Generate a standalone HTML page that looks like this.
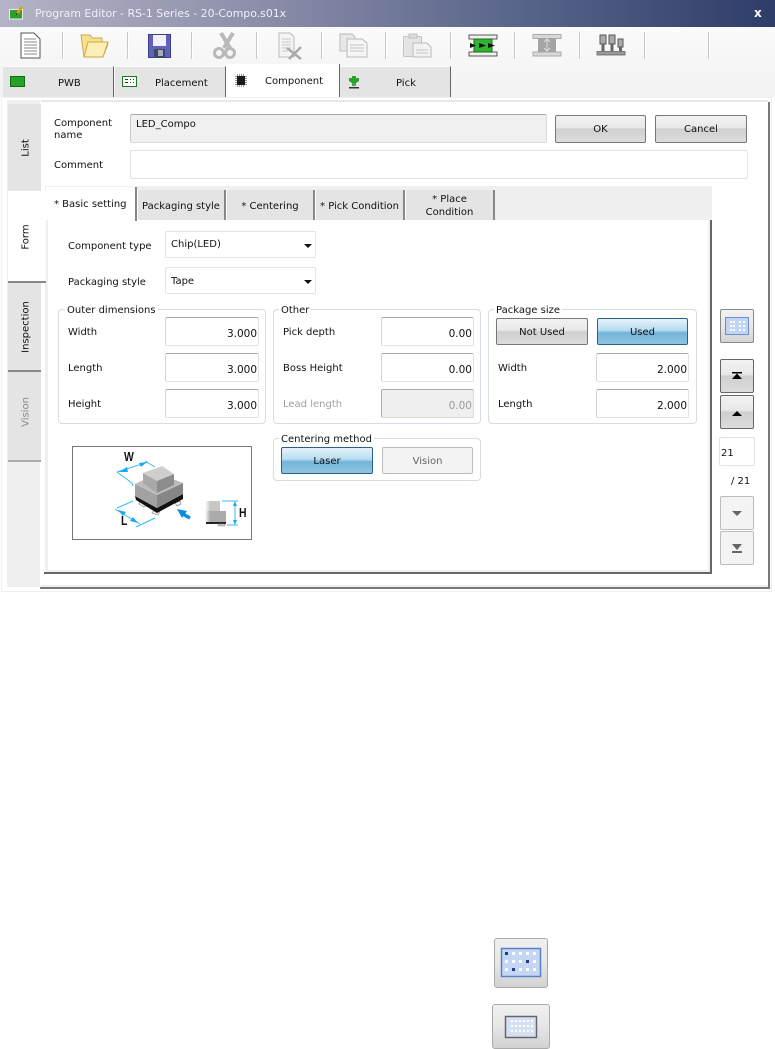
<!DOCTYPE html>
<html><head><meta charset="utf-8"><style>
html,body{margin:0;padding:0;background:#fff;width:775px;height:1049px;overflow:hidden}
body{position:relative;font:10px "DejaVu Sans","Liberation Sans",sans-serif;color:#111}
.a,.t,.i,.b,.g,.v,.sep{position:absolute;box-sizing:border-box}
.t{white-space:nowrap;line-height:14px;margin-top:1px}
.i{background:#fff;border:1px solid #dfe3e8;border-top-color:#a8a8a8;border-left-color:#d4d4d4;border-radius:2px;text-align:right;padding:9px 1px 0 0;line-height:14px;height:29px;width:93px;font-size:10.5px}
.b{text-align:center;border-radius:2px;line-height:28px;height:27px}
.up{background:linear-gradient(#f2f2f2,#e8e8e8 45%,#cfcfcf 50%,#dcdcdc);border:1px solid #777}
.on{background:linear-gradient(#e4f2fa,#b8dcf0 45%,#74b4da 55%,#8ec4e2);border:1px solid #2b5f88}
.off{background:#f3f3f3;border:1px solid #bcbcbc;color:#666}
.g{border:1px solid #d5dce4;border-radius:4px}
.lg{position:absolute;top:-6px;left:6px;background:#fff;padding:0 2px;line-height:13px;white-space:nowrap}
.sep{top:32px;height:27px;background:#c8c8c8;border-right:1px solid #fff;width:2px}
.mt{position:absolute;top:66px;height:31px;background:#e4e4e4;border-right:1px solid #666;border-top:1px solid #fafafa;box-sizing:border-box}
.v{left:8px;width:33px;background:#e4e4e4}
.v span{position:absolute;left:54%;top:50%;transform:translate(-50%,-50%) rotate(-90deg);white-space:nowrap}
.st{position:absolute;top:190px;height:30px;background:#e4e4e4;border-right:2px solid #888;border-left:1px solid #fff;box-sizing:border-box;text-align:center;line-height:13px;display:flex;align-items:center;justify-content:center;padding-top:2px}
.sel{position:absolute;left:165px;width:151px;height:27px;background:#fff;border:1px solid #e0e3e8;border-radius:2px;padding:6px 0 0 5px;line-height:14px;box-sizing:border-box}
.sel:after{content:"";position:absolute;right:3px;top:12px;border:4px solid transparent;border-top:4px solid #111;border-bottom:0}
.nb{position:absolute;left:720px;width:34px;height:34px;box-sizing:border-box;border-radius:2px}
</style></head><body>

<!-- title bar -->
<div class="a" style="left:0;top:0;width:775px;height:27px;background:linear-gradient(90deg,#b4b4c6,#8d8eaa 33%,#5f6a8e 62%,#2e3c69)"></div>
<svg class="a" style="left:9px;top:6px" width="16" height="14"><rect x="0.500" y="3.500" width="13" height="9.500" fill="#2e9e2e" stroke="#eee"/><path d="M8 8 L13 1" stroke="#d9a400" stroke-width="2.500"/><path d="M7.500 9 L8 7" stroke="#222"/></svg>
<div class="t" style="left:35px;top:6px;color:#eef0f6;font-size:10.9px">Program Editor - RS-1 Series - 20-Compo.s01x</div>
<div class="t" style="left:754px;top:5px;color:#fff;font-weight:bold;font-size:12px">x</div>

<!-- toolbar -->
<div class="a" style="left:0;top:27px;width:775px;height:70px;background:linear-gradient(#fafafa,#f2f2f2)"></div>
<div class="sep" style="left:62px"></div><div class="sep" style="left:127px"></div><div class="sep" style="left:191px"></div><div class="sep" style="left:256px"></div><div class="sep" style="left:321px"></div><div class="sep" style="left:385px"></div><div class="sep" style="left:450px"></div><div class="sep" style="left:514px"></div><div class="sep" style="left:579px"></div><div class="sep" style="left:644px"></div><div class="sep" style="left:708px"></div>
<svg class="a" style="left:0;top:27px" width="775" height="38" fill="none">
 <path d="M21 6H34L40 12V31H21Z" fill="#fff" stroke="#555"/><path d="M24 12H36M24 15H37M24 18H37M24 21H37M24 24H37M24 27H37" stroke="#888"/>
 <path d="M84 30L81 8H90L92 11H102V17H108L103 30Z" fill="#fbe08c" stroke="#c9a94a"/><path d="M84 30L88 15H108L103 30Z" fill="#fdeeb6" stroke="#c9a94a"/>
 <rect x="148.500" y="7.500" width="22" height="23" fill="#5f62b8" stroke="#3c3f8e"/><rect x="153" y="8" width="13" height="11" fill="#eef0fa"/><rect x="154" y="22" width="11" height="8" fill="#3a4a60"/><rect x="158" y="23" width="5" height="6" fill="#aab"/>
 <path d="M221 6L230 21M233 6L224 21" stroke="#b9b9b9" stroke-width="4"/><circle cx="219" cy="26" r="4.500" stroke="#b9b9b9" stroke-width="3"/><circle cx="230" cy="26" r="4.500" stroke="#b9b9b9" stroke-width="3"/>
 <path d="M279 6H290L294 10V30H279Z" fill="#f4f4f4" stroke="#bbb"/><path d="M282 12H291M282 15H291M282 18H291M282 21H291M282 24H288" stroke="#c8c8c8"/><path d="M287 21L301 32M301 20L289 32" stroke="#a9a9a9" stroke-width="2.500"/>
 <path d="M340 7H352L355 10V24H340Z" fill="#e8e8e8" stroke="#bbb"/><path d="M347 12H362L367 16V30H347Z" fill="#f4f4f4" stroke="#bbb"/><path d="M350 18H364M350 21H364M350 24H364" stroke="#c4c4c4"/>
 <rect x="403.500" y="9.500" width="18" height="20" rx="1" fill="#e4e4e4" stroke="#c4c4c4"/><rect x="409" y="7" width="8" height="4" fill="#ddd" stroke="#c0c0c0"/><path d="M413 16H427L431 20V30H413Z" fill="#f2f2f2" stroke="#bbb"/><path d="M416 23H428M416 26H428" stroke="#c4c4c4"/>
 <rect x="469" y="8" width="28" height="4" fill="#f0f0f0" stroke="#333" stroke-width=".8"/><rect x="469" y="25" width="28" height="4" fill="#f0f0f0" stroke="#333" stroke-width=".8"/><rect x="474" y="12" width="18" height="13" fill="#2fb52f" stroke="#1a6a1a"/><path d="M470 16L476 18.500L470 21ZM479 16L486 18.500L479 21ZM488 16L495 18.500L488 21Z" fill="#111"/>
 <rect x="533" y="7.500" width="28" height="4" fill="#d8d8d8" stroke="#aaa"/><rect x="533" y="25" width="28" height="4" fill="#d8d8d8" stroke="#aaa"/><rect x="538" y="11" width="18" height="14" fill="#a4a4a4"/><path d="M547 12V24M544 15L547 12L550 15M544 21L547 24L550 21" stroke="#ddd"/>
 <rect x="597" y="24.500" width="28" height="3.500" fill="#999" stroke="#666" stroke-width=".8"/><path d="M600 8H606V17H600ZM609 8H615V17H609ZM618 12H623V20H618Z" fill="#aaa" stroke="#555"/><path d="M603 17V24M612 17V24M620.500 20V24" stroke="#666" stroke-width="3"/>
</svg>

<!-- main tabs -->
<div class="mt" style="left:3px;width:111px"></div>
<div class="mt" style="left:115px;width:111px"></div>
<div class="mt" style="left:340px;width:111px"></div>
<div class="a" style="left:226px;top:64px;width:114px;height:34px;background:#fff;border-right:1px solid #666;box-sizing:border-box"></div>
<div class="a" style="left:10px;top:76px;width:15px;height:11px;background:#27a127;border:1px solid #0d6d0d;box-sizing:border-box"></div>
<svg class="a" style="left:122px;top:76px" width="15" height="11"><rect x=".5" y=".5" width="14" height="10" fill="#fff" stroke="#1b7a1b"/><path d="M3 3.500H6M8 3.500H9M11 3.500H12M3 6.500H6M8 6.500H9M11 6.500H12" stroke="#333"/></svg>
<svg class="a" style="left:235px;top:74px" width="12" height="13"><path d="M0 2.500H12M0 4.500H12M0 6.500H12M0 8.500H12M0 10.500H12M2.500 0V13M4.500 0V13M6.500 0V13M8.500 0V13" stroke="#777" stroke-width=".7"/><rect x="2" y="2" width="8" height="9" fill="#1a1a1a"/></svg>
<svg class="a" style="left:348px;top:76px" width="12" height="13"><path d="M4 0H8V2H11V5L8 7H4L1 5V2H4Z" fill="#27a527"/><rect x="4" y="7" width="4" height="3" fill="#596"/><rect x="1" y="11" width="10" height="1.500" fill="#333"/></svg>
<div class="t" style="left:58px;top:76px">PWB</div>
<div class="t" style="left:155px;top:76px">Placement</div>
<div class="t" style="left:265px;top:74px">Component</div>
<div class="t" style="left:396px;top:76px">Pick</div>

<!-- frame -->
<div class="a" style="left:1px;top:97px;width:771px;height:495px;border:1px solid #efefef;background:#fff;box-sizing:border-box"></div>
<div class="a" style="left:7px;top:100px;width:34px;height:487px;background:#efefef;border-right:1px solid #fff;box-sizing:border-box"></div>
<div class="a" style="left:41px;top:100px;width:727px;height:2px;background:#e8e8e8"></div>
<div class="a" style="left:41px;top:585px;width:727px;height:2px;background:#eee"></div>
<div class="a" style="left:40px;top:587px;width:729px;height:2px;background:#777"></div>
<div class="a" style="left:768px;top:102px;width:2px;height:487px;background:#777"></div>

<!-- vertical tabs -->
<div class="v" style="top:104px;height:87px"><span>List</span></div>
<div class="v" style="top:191px;height:92px;background:#fff;border-bottom:2px solid #888;z-index:1;width:38px"><span style="left:47%;margin-top:1px">Form</span></div>
<div class="v" style="top:283px;height:89px;border-bottom:2px solid #888"><span>Inspection</span></div>
<div class="v" style="top:372px;height:90px;border-bottom:2px solid #aaa;color:#888"><span style="margin-top:-4px">Vision</span></div>

<!-- header fields -->
<div class="t" style="left:54px;top:117px;line-height:12px">Component<br>name</div>
<div class="a" style="left:130px;top:114px;width:417px;height:29px;background:#f0f0f0;border:1px solid #dcdcdc;border-top-color:#a8a8a8;border-left-color:#c8c8c8;box-sizing:border-box;border-radius:2px;padding:3px 0 0 5px;line-height:14px">LED_Compo</div>
<div class="b up" style="left:555px;top:115px;width:91px;height:28px;line-height:28px">OK</div>
<div class="b up" style="left:655px;top:115px;width:92px;height:28px;line-height:28px">Cancel</div>
<div class="t" style="left:54px;top:158px">Comment</div>
<div class="a" style="left:130px;top:150px;width:618px;height:29px;background:#fff;border:1px solid #dfe3e8;border-radius:2px;box-sizing:border-box"></div>

<!-- sub tabs -->
<div class="a" style="left:45px;top:186px;width:667px;height:34px;background:#efefef"></div>
<div class="a" style="left:46px;top:187px;width:91px;height:34px;background:#fff;border-right:2px solid #888;box-sizing:border-box"></div>
<div class="t" style="left:54px;top:197px">* Basic setting</div>
<div class="st" style="left:137px;width:89px">Packaging style</div>
<div class="st" style="left:226px;width:89px">* Centering</div>
<div class="st" style="left:315px;width:90px">* Pick Condition</div>
<div class="st" style="left:405px;width:90px">* Place<br>Condition</div>
<div class="a" style="left:45px;top:220px;width:3px;height:351px;background:#efefef"></div>
<div class="a" style="left:708px;top:221px;width:3px;height:350px;background:#efefef"></div>
<div class="a" style="left:45px;top:570px;width:666px;height:3px;background:#efefef"></div>
<div class="a" style="left:44px;top:572px;width:668px;height:2px;background:#666"></div>
<div class="a" style="left:710px;top:220px;width:2px;height:354px;background:#666"></div>

<!-- form selects -->
<div class="t" style="left:68px;top:239px">Component type</div>
<div class="sel" style="top:231px">Chip(LED)</div>
<div class="t" style="left:68px;top:275px">Packaging style</div>
<div class="sel" style="top:267px;padding-top:7px">Tape</div>

<!-- Outer dimensions -->
<div class="g" style="left:58px;top:309px;width:208px;height:115px"><span class="lg">Outer dimensions</span></div>
<div class="t" style="left:68px;top:325px">Width</div><div class="i" style="left:165px;top:317px;width:94px">3.000</div>
<div class="t" style="left:68px;top:361px">Length</div><div class="i" style="left:165px;top:353px;width:94px">3.000</div>
<div class="t" style="left:68px;top:397px">Height</div><div class="i" style="left:165px;top:389px;width:94px">3.000</div>

<!-- Other -->
<div class="g" style="left:273px;top:309px;width:208px;height:115px"><span class="lg" style="left:5px">Other</span></div>
<div class="t" style="left:283px;top:325px">Pick depth</div><div class="i" style="left:381px;top:317px">0.00</div>
<div class="t" style="left:283px;top:361px">Boss Height</div><div class="i" style="left:381px;top:353px">0.00</div>
<div class="t" style="left:283px;top:397px;color:#a0a0a0">Lead length</div><div class="i" style="left:381px;top:389px;background:#efefef;color:#999;border-color:#aaa #dadada #dadada #aaa">0.00</div>

<!-- Package size -->
<div class="g" style="left:488px;top:309px;width:209px;height:115px"><span class="lg" style="left:5px">Package size</span></div>
<div class="b up" style="left:496px;top:318px;width:92px">Not Used</div>
<div class="b on" style="left:597px;top:318px;width:91px">Used</div>
<div class="t" style="left:498px;top:361px">Width</div><div class="i" style="left:596px;top:353px">2.000</div>
<div class="t" style="left:498px;top:397px">Length</div><div class="i" style="left:596px;top:389px">2.000</div>

<!-- Centering -->
<div class="g" style="left:273px;top:438px;width:208px;height:43px"><span class="lg" style="left:5px">Centering method</span></div>
<div class="b on" style="left:281px;top:447px;width:92px">Laser</div>
<div class="b off" style="left:382px;top:447px;width:91px">Vision</div>

<!-- diagram -->
<div class="a" style="left:72px;top:446px;width:180px;height:94px;border:1px solid #777;box-sizing:border-box;background:#fff"></div>
<svg class="a" style="left:72px;top:446px" width="180" height="94" fill="none">
 <path d="M69 55L75 59L72 61L67 58ZM82 64L88 65L86 69L80 67ZM103 57L108 55L109 58L105 60Z" fill="#f4f4f4" stroke="#888" stroke-width=".7"/>
 <path d="M63 50L85 62L111 48V53L85 67L64 54Z" fill="#111"/>
 <path d="M63 38L85 49V62L63 50Z" fill="#a2a2a2"/><path d="M85 49L111 37V48L85 62Z" fill="#868686"/><path d="M63 38L86 27L111 37L85 49Z" fill="#bcbcbc"/>
 <path d="M71 27L85 35V47L71 37Z" fill="#a8a8a8"/><path d="M85 35L102 28V39L85 47Z" fill="#8c8c8c"/><path d="M71 27L90 20L102 28L85 35Z" fill="#cecece"/>
 <path d="M45 26L76 16M45 26L60 37L61 40M73 15L83 21M43 63L68 78M45 62L61 55M64 81L83 72" stroke="#35b8f4"/><path d="M47 26L55 21L56 26ZM75 16L67 17L69 21ZM46 64L54 66L51 70ZM66 77L58 75L61 71Z" fill="#1ca8f0"/>
 <path d="M109 67L118 72" stroke="#0a8ee0" stroke-width="3.500"/><path d="M105 63L115 65L110 72Z" fill="#0a8ee0"/>
 <defs><linearGradient id="fa" x1="0" x2="1" y1="0" y2="0"><stop offset="0" stop-color="#fff"/><stop offset=".25" stop-color="#aaa"/></linearGradient><linearGradient id="fb" x1="0" x2="1" y1="0" y2="0"><stop offset="0" stop-color="#fff"/><stop offset=".35" stop-color="#c6c6c6"/></linearGradient></defs>
 <rect x="133" y="55" width="15" height="10" fill="url(#fb)"/><rect x="133" y="65" width="21" height="11" fill="url(#fa)"/><rect x="134" y="76" width="20" height="2" fill="#222"/><rect x="146" y="78" width="7" height="2" fill="#ccc" stroke="#888" stroke-width=".5"/>
 <path d="M150 55H166M155 79H166M163 56V78" stroke="#35b8f4"/><path d="M163 55L161 60H165ZM163 79L161 74H165Z" fill="#1ca8f0"/>
</svg>
<div class="t" style="left:124px;top:450px;margin:0;font-weight:bold;font-size:13px;font-family:'Liberation Sans',sans-serif;transform:scaleX(.8);transform-origin:left">W</div>
<div class="t" style="left:121px;top:514px;margin:0;font-weight:bold;font-size:13px;font-family:'Liberation Sans',sans-serif;transform:scaleX(.8);transform-origin:left">L</div>
<div class="t" style="left:239px;top:506px;margin:0;font-weight:bold;font-size:13px;font-family:'Liberation Sans',sans-serif;transform:scaleX(.8);transform-origin:left">H</div>

<!-- right nav -->
<div class="nb up" style="top:309px;border-color:#888;background:linear-gradient(#f2f2f2,#e8e8e8 50%,#d4d4d4)"><svg width="32" height="32"><rect x="4.500" y="7.500" width="23" height="17" fill="#c0d4f4" stroke="#6f8fc8"/><g fill="#fff"><path d="M9 11h2v2H9zM12 11h2v2h-2zM18 11h2v2h-2zM22 11h2v2h-2zM9 15h2v2H9zM12 15h2v2h-2zM18 15h2v2h-2zM22 15h2v2h-2zM9 19h2v2H9zM12 19h2v2h-2zM18 19h2v2h-2zM22 19h2v2h-2z"/></g></svg></div>
<div class="nb up" style="top:359px;border-color:#666"><svg width="32" height="32"><path d="M11 12H21V13.500H11ZM16 13.500L21 19H11Z" fill="#000"/></svg></div>
<div class="nb up" style="top:395px;border-color:#666"><svg width="32" height="32"><path d="M16 15L21 20H11Z" fill="#000"/></svg></div>
<div class="a" style="left:719px;top:437px;width:36px;height:29px;border:1px solid #dfe3e8;border-radius:2px;box-sizing:border-box;padding:9px 0 0 1px;line-height:14px">21</div>
<div class="t" style="left:731px;top:474px">/ 21</div>
<div class="nb off" style="top:496px"><svg width="32" height="32"><path d="M11 14H21L16 19Z" fill="#666"/></svg></div>
<div class="nb off" style="top:531px"><svg width="32" height="32"><path d="M11 12H21L16 18ZM11 19H21V21H11Z" fill="#666"/></svg></div>

<!-- bottom icons -->
<div class="a" style="left:494px;top:938px;width:54px;height:50px;border:1px solid #aaa;border-radius:3px;box-sizing:border-box;background:linear-gradient(#f0f0f0,#e6e6e6 50%,#d2d2d2)"><svg width="52" height="48"><rect x="6.500" y="9.500" width="39" height="28" fill="#c4d6f4" stroke="#5a80c8" stroke-width="1.500"/><g fill="#fff"><path d="M17 13h3v3h-3zM24 13h3v3h-3zM31 13h3v3h-3zM38 13h3v3h-3zM10 21h3v3h-3zM17 21h3v3h-3zM24 21h3v3h-3zM38 21h3v3h-3zM10 29h3v3h-3zM24 29h3v3h-3zM31 29h3v3h-3zM38 29h3v3h-3z"/></g><g fill="#1f3f7f"><path d="M10 13h3v3h-3zM31 21h3v3h-3zM17 29h3v3h-3z"/></g></svg></div>
<div class="a" style="left:492px;top:1004px;width:58px;height:45px;border:1px solid #aaa;border-radius:3px;box-sizing:border-box;background:linear-gradient(#f0f0f0,#e6e6e6 50%,#d2d2d2)"><svg width="56" height="43"><rect x="12.500" y="11.500" width="31" height="21" fill="#d6e0f4" stroke="#666" stroke-width="1.500"/><g fill="#fff"><path d="M18 15h2v2h-2zM22 15h2v2h-2zM26 15h2v2h-2zM30 15h2v2h-2zM34 15h2v2h-2zM38 15h2v2h-2zM18 20h2v2h-2zM22 20h2v2h-2zM26 20h2v2h-2zM30 20h2v2h-2zM34 20h2v2h-2zM38 20h2v2h-2zM18 25h2v2h-2zM22 25h2v2h-2zM26 25h2v2h-2zM30 25h2v2h-2zM34 25h2v2h-2zM38 25h2v2h-2z"/></g></svg></div>

</body></html>
